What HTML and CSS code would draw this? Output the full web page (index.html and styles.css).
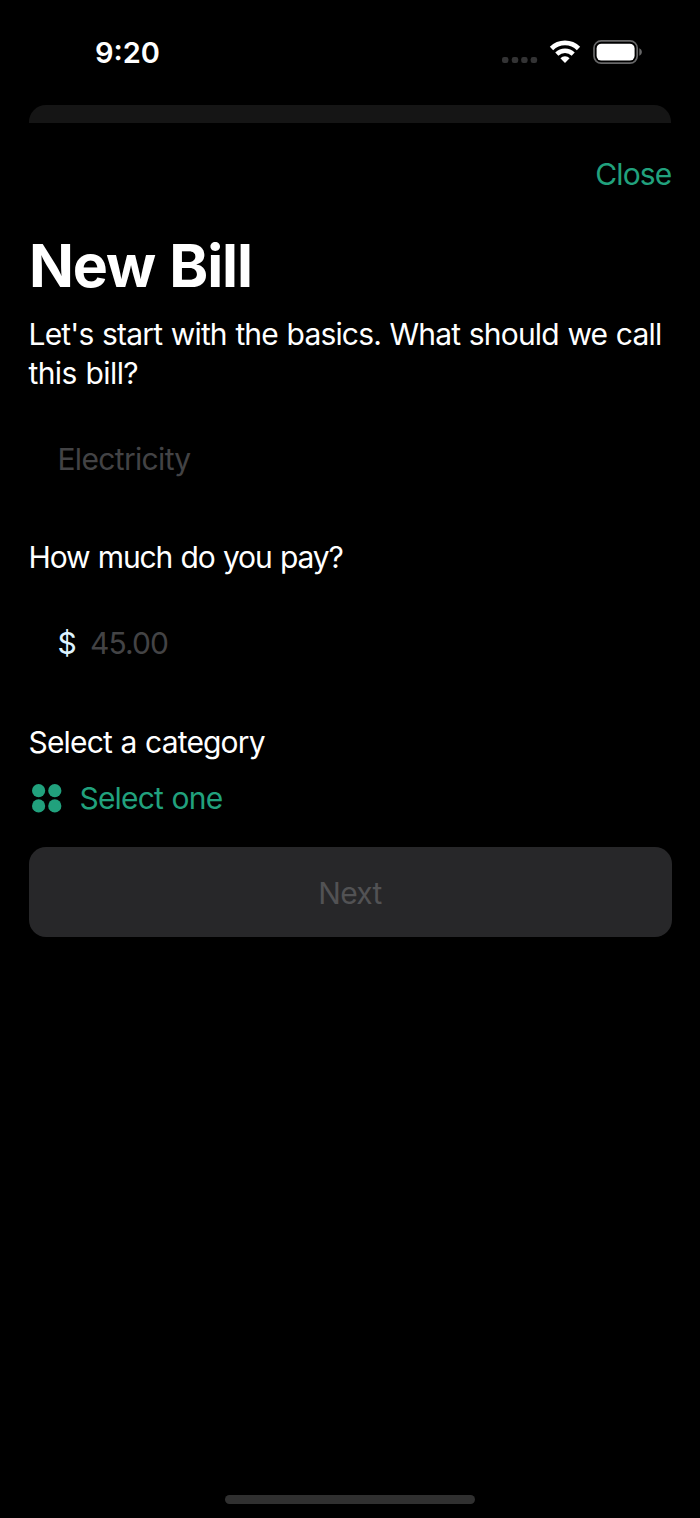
FILE: index.html
```html
<!DOCTYPE html>
<html lang="en">
<head>
<meta charset="utf-8">
<title>New Bill</title>
<link rel="stylesheet" href="styles.css">
</head>
<body>
<div class="screen">
  <header class="status">
    <span class="time">9:20</span>
    <svg class="status-icons" width="142" height="30" viewBox="0 0 142 30">
      <g fill="#333334">
        <rect x="2" y="17" width="6.4" height="6" rx="2.2"/>
        <rect x="11.8" y="17" width="6.4" height="6" rx="2.2"/>
        <rect x="21.2" y="17" width="6.4" height="6" rx="2.2"/>
        <rect x="30.7" y="17" width="6.4" height="6" rx="2.2"/>
      </g>
      <g fill="none" stroke="#fff">
        <path d="M51.5 8.5a19.1 19.1 0 0 1 27 0" stroke-width="4.7"/>
        <path d="M56.8 14.1a11.6 11.6 0 0 1 16.4 0" stroke-width="4.4"/>
      </g>
      <path d="M60.4 18.2a6.5 6.5 0 0 1 9.2 0L65 22.9Z" fill="#fff"/>
      <rect x="94" y="0.9" width="43.2" height="22.3" rx="7.2" fill="none" stroke="#676768" stroke-width="1.7"/>
      <rect x="96.6" y="3.7" width="38" height="16.9" rx="4.8" fill="#fff"/>
      <path d="M139.3 8.2c3.4 1.5 3.4 6 0 7.5Z" fill="#676768"/>
    </svg>
  </header>
  <div class="back-sheet"></div>
  <main class="sheet">
    <button class="link close">Close</button>
    <h1 class="title">New Bill</h1>
    <p class="text intro">Let's start with the basics. What should we call<br><span class="intro-end">this bill?</span></p>
    <div class="field name-field">Electricity</div>
    <p class="text amount-label">How much do you pay?</p>
    <div class="field amount-field"><span class="currency">$</span><span class="amount">45.00</span></div>
    <p class="text category-label">Select a category</p>
    <button class="link category">
      <svg class="grid-icon" width="30" height="30" viewBox="0 0 30 30" fill="#21a17d">
        <circle cx="6.6" cy="6.7" r="6.6"/><circle cx="22.8" cy="6.7" r="6.6"/>
        <circle cx="6.6" cy="21.9" r="6.6"/><circle cx="22.8" cy="21.9" r="6.6"/>
      </svg>
      <span class="category-text">Select one</span>
    </button>
    <button class="next">Next</button>
  </main>
  <div class="home-bar"></div>
</div>
</body>
</html>
```
FILE: styles.css
```css
* { box-sizing: border-box; }
body { margin: 0; background: #000; }
button { display: block; border: 0; padding: 0; background: none; font: inherit; letter-spacing: inherit; }
.screen {
  display: flex;
  flex-direction: column;
  width: 700px;
  height: 1518px;
  background: #000;
  color: #fff;
  font: 400 30px/39px Inter, sans-serif;
  letter-spacing: -0.67px;
}
.status {
  display: flex;
  justify-content: space-between;
  height: 105px;
  padding: 33px 58px 0 95px;
}
.time { font-size: 29px; font-weight: 600; letter-spacing: 0; }
.status-icons { margin-top: 7px; }
.back-sheet {
  height: 18px;
  margin: 0 29px;
  border-radius: 17px 17px 0 0;
  background: #151515;
}
.sheet {
  display: flex;
  flex: 1;
  flex-direction: column;
  padding: 32px 28.5px 0;
}
.link { color: #21a17d; text-align: left; }
.close { align-self: flex-end; letter-spacing: -0.85px; }
.title {
  margin: 37px 0 0;
  padding-left: 0.5px;
  font-size: 59px;
  line-height: 70px;
  font-weight: 700;
  letter-spacing: -1.15px;
  word-spacing: 1.5px;
}
.text { margin: 0; white-space: nowrap; word-spacing: 1px; }
.intro { margin-top: 14px; letter-spacing: -0.83px; }
.intro-end { letter-spacing: -0.6px; }
.field { margin-top: 47px; padding-left: 29px; color: #434345; }
.amount-label { margin-top: 59px; letter-spacing: -1.12px; }
.amount-field { display: flex; gap: 14px; margin-top: 47px; }
.currency { color: #def3ff; }
.amount { letter-spacing: -0.9px; }
.category-label { margin-top: 60px; letter-spacing: -0.84px; }
.category { display: flex; align-items: center; gap: 18px; margin-top: 17px; padding-left: 3px; letter-spacing: -0.83px; word-spacing: 1px; }
.next {
  height: 90px;
  margin-top: 29px;
  padding-top: 2px;
  border-radius: 17px;
  background: #272729;
  color: #525254;
  text-align: center;
}
.home-bar {
  width: 250px;
  height: 9px;
  margin: 0 auto 14px;
  border-radius: 5px;
  background: #303030;
}
```
